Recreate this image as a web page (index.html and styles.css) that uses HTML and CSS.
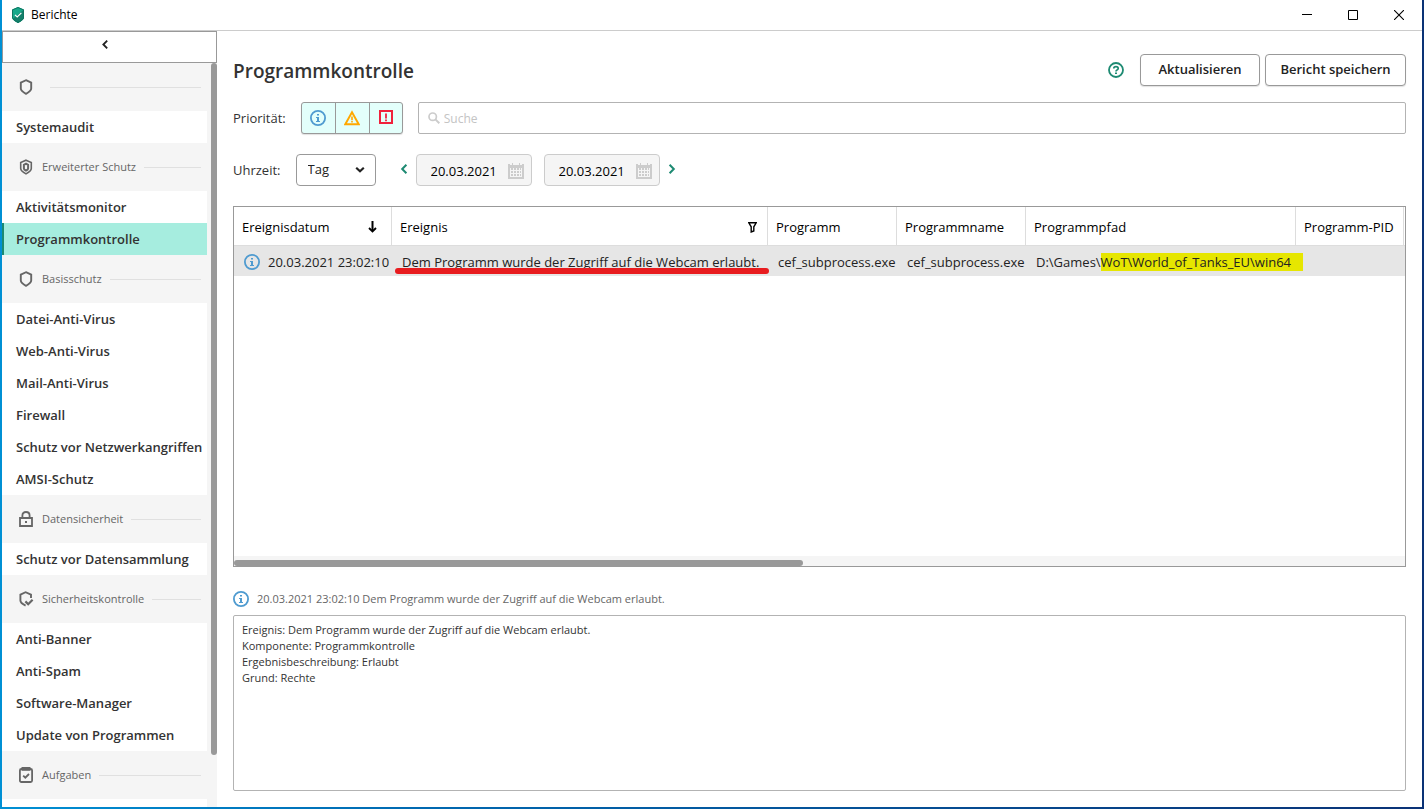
FILE: index.html
```
<!DOCTYPE html>
<html lang="de">
<head>
	<meta charset="UTF-8">
	<meta name="viewport" content="width=device-width, initial-scale=1">
	<title>Berichte</title>
	<link rel="stylesheet" href="styles.css">
</head>
<body>
	<!-- icons -->
	<svg class="sprite" aria-hidden="true">
		<symbol id="i-shield" viewBox="0 0 16 16"><path d="M8 1.2 13.2 3.6V9.6Q13.2 12.2 8 14.8Q2.8 12.2 2.8 9.6V3.6Z" fill="none" stroke="currentColor" stroke-width="1.9"/></symbol>
		<symbol id="i-shield2" viewBox="0 0 16 16"><path d="M8 1.2 13.3 3.5V9.6Q13.3 12.2 8 14.9Q2.7 12.2 2.7 9.6V3.5Z" fill="none" stroke="currentColor" stroke-width="1.6"/><path d="M8 4.6 10.1 5.8V9.4Q10.1 10.6 8 11.6Q5.9 10.6 5.9 9.4V5.8Z" fill="none" stroke="currentColor" stroke-width="2"/></symbol>
		<symbol id="i-lock" viewBox="0 0 16 16"><path d="M2 7H14V15H2ZM4.4 7V4.4Q4.4 1 8 1T11.6 4.4V7" fill="none" stroke="currentColor" stroke-width="1.8"/><path d="M7 10H9V12H7Z" fill="currentColor"/></symbol>
		<symbol id="i-control" viewBox="0 0 16 16"><path d="M13 7V3.7L7.6 1.2 2.4 3.7V9.6Q2.4 12.3 7.6 14.6" fill="none" stroke="currentColor" stroke-width="1.9"/><path d="M7.4 10.4 10.2 13.2 14.6 8.8" fill="none" stroke="currentColor" stroke-width="2.2"/></symbol>
		<symbol id="i-task" viewBox="0 0 16 16"><rect x="1.9" y="2" width="12.2" height="13" rx="1.5" fill="none" stroke="currentColor" stroke-width="1.8"/><path d="M3.5 0H12.5V3.8H3.5Z" fill="currentColor"/><path d="M5.2 8.6 7.3 10.6 11 7" fill="none" stroke="currentColor" stroke-width="1.9"/></symbol>
		<symbol id="i-info" viewBox="0 0 16 16"><circle cx="8" cy="8" r="7.1" fill="none" stroke="currentColor" stroke-width="1.8"/><path d="M7 4H9V5.6H7ZM6 7H9V11H10V12H6V11H7V8H6Z" fill="currentColor"/></symbol>
		<symbol id="i-warn" viewBox="0 0 16 16"><path d="M8 2.2 14.7 14.2H1.3Z" fill="none" stroke="currentColor" stroke-width="1.9"/><path d="M7.2 6.5H8.8V10.2H7.2ZM7.2 11H8.8V12.6H7.2Z" fill="currentColor"/></symbol>
		<symbol id="i-crit" viewBox="0 0 16 16"><path d="M2 1H14V13H2Z" fill="none" stroke="currentColor" stroke-width="2"/><path d="M7.1 3.4H8.9V8.6H7.1ZM7.1 9.6H8.9V11.2H7.1Z" fill="currentColor"/></symbol>
		<symbol id="i-cal" viewBox="0 0 16 16"><path fill-rule="evenodd" d="M0 1H2V2H4V0H5V2H11V0H12V2H14V1H16V16H0ZM2 5V14H14V5Z" fill="currentColor"/><path d="M3 5H5V7H3ZM6 5H8V7H6ZM9 5H11V7H9ZM12 5H13V7H12ZM3 8H5V10H3ZM6 8H8V10H6ZM9 8H11V10H9ZM12 8H13V10H12ZM3 11H5V13H3ZM6 11H8V13H6ZM9 11H11V13H9ZM12 11H13V13H12Z" fill="currentColor"/></symbol>
		<symbol id="i-left" viewBox="0 0 8 12"><path d="M6.4 1.8 2.2 6 6.4 10.2" fill="none" stroke="currentColor" stroke-width="2"/></symbol>
		<symbol id="i-right" viewBox="0 0 8 12"><path d="M1.6 1.8 5.8 6 1.6 10.2" fill="none" stroke="currentColor" stroke-width="2"/></symbol>
	</svg>

	<div class="window">
		<header class="titlebar">
			<svg class="logo" viewBox="0 0 14 16"><path d="M7 0 13 2.6V11Q12 13.6 7 16Q2 13.6 1 11V2.6Z" fill="#17a88a"/><path d="M13 2.6V11Q12 13.6 7 16Q3 14 1.6 12Z" fill="#14806b"/><path d="M7 .5 12.5 2.9V11Q11.6 13.3 7 15.5Q2.4 13.3 1.5 11V2.9Z" fill="none" stroke="#0f7561"/><path d="M4 7.8 6.2 10 10.4 5.8" fill="none" stroke="#fff" stroke-width="1.2"/></svg>
			<span class="caption">Berichte</span>
			<button class="win-btn" aria-label="Minimieren"><svg width="10" height="10"><path d="M0 4.5H10" stroke="#000"/></svg></button>
			<button class="win-btn" aria-label="Maximieren"><svg width="10" height="10"><path d="M.5 .5H9.5V9.5H.5Z" fill="none" stroke="#000"/></svg></button>
			<button class="win-btn" aria-label="Schließen"><svg width="10" height="10"><path d="M0 0 10 10M10 0 0 10" stroke="#000" stroke-width="1.1"/></svg></button>
		</header>

		<div class="body">
			<aside class="sidebar">
				<button class="collapse" aria-label="Menü einklappen"><svg class="arrow"><use href="#i-left"/></svg></button>
				<div class="nav-wrap">
					<nav class="nav">
						<h2 class="group"><svg class="icon"><use href="#i-shield"/></svg></h2>
						<a class="item" href="#">Systemaudit</a>

						<h2 class="group"><svg class="icon"><use href="#i-shield2"/></svg>Erweiterter Schutz</h2>
						<a class="item" href="#">Aktivitätsmonitor</a>
						<a class="item active" href="#">Programmkontrolle</a>

						<h2 class="group"><svg class="icon"><use href="#i-shield"/></svg>Basisschutz</h2>
						<a class="item" href="#">Datei-Anti-Virus</a>
						<a class="item" href="#">Web-Anti-Virus</a>
						<a class="item" href="#">Mail-Anti-Virus</a>
						<a class="item" href="#">Firewall</a>
						<a class="item" href="#">Schutz vor Netzwerkangriffen</a>
						<a class="item" href="#">AMSI-Schutz</a>

						<h2 class="group"><svg class="icon"><use href="#i-lock"/></svg>Datensicherheit</h2>
						<a class="item" href="#">Schutz vor Datensammlung</a>

						<h2 class="group"><svg class="icon"><use href="#i-control"/></svg>Sicherheitskontrolle</h2>
						<a class="item" href="#">Anti-Banner</a>
						<a class="item" href="#">Anti-Spam</a>
						<a class="item" href="#">Software-Manager</a>
						<a class="item" href="#">Update von Programmen</a>

						<h2 class="group"><svg class="icon"><use href="#i-task"/></svg>Aufgaben</h2>
						<a class="item" href="#" aria-hidden="true"></a>
					</nav>
					<div class="vscroll"><div class="vthumb"></div></div>
				</div>
			</aside>

			<main class="main">
				<div class="head">
					<h1>Programmkontrolle</h1>
					<button class="help" aria-label="Hilfe"><svg class="icon" viewBox="0 0 16 16"><circle cx="8" cy="8" r="7" fill="none" stroke="currentColor" stroke-width="1.8"/><path d="M5.8 6.6Q5.8 4.7 8 4.7T10.2 6.4Q10.2 7.4 9 8Q8 8.5 8 9.4" fill="none" stroke="currentColor" stroke-width="1.7"/><path d="M7 10.4H9V12H7Z" fill="currentColor"/></svg></button>
					<button class="btn btn-refresh">Aktualisieren</button>
					<button class="btn btn-save">Bericht speichern</button>
				</div>

				<div class="row row-prio">
					<span>Priorität:</span>
					<div class="prio">
						<label class="info"><input type="checkbox" checked aria-label="Information"><svg class="icon"><use href="#i-info"/></svg></label>
						<label class="warn"><input type="checkbox" checked aria-label="Warnung"><svg class="icon"><use href="#i-warn"/></svg></label>
						<label class="crit"><input type="checkbox" checked aria-label="Kritisch"><svg class="icon"><use href="#i-crit"/></svg></label>
					</div>
					<label class="search">
						<svg width="12" height="12" viewBox="0 0 12 12"><circle cx="4.7" cy="4.7" r="3.7" fill="none" stroke="currentColor" stroke-width="1.7"/><path d="M7.4 7.4 11.3 11.3" stroke="currentColor" stroke-width="2"/></svg>
						<input type="text" placeholder="Suche" aria-label="Suche">
					</label>
				</div>

				<div class="row row-time">
					<label for="range">Uhrzeit:</label>
					<div class="select">
						<select id="range"><option>Tag</option><option>Woche</option><option>Monat</option><option>Jahr</option></select>
						<svg width="10" height="6" viewBox="0 0 10 6"><path d="M1.2 .8 5 4.2 8.8 .8" fill="none" stroke="#222" stroke-width="2.2"/></svg>
					</div>
					<div class="dates">
						<button class="step" aria-label="Zurück"><svg class="arrow"><use href="#i-left"/></svg></button>
						<label class="date"><input type="text" value="20.03.2021" aria-label="Von"><svg class="icon"><use href="#i-cal"/></svg></label>
						<label class="date"><input type="text" value="20.03.2021" aria-label="Bis"><svg class="icon"><use href="#i-cal"/></svg></label>
						<button class="step" aria-label="Weiter"><svg class="arrow"><use href="#i-right"/></svg></button>
					</div>
				</div>

				<div class="grid">
					<div class="grid-body">
						<table>
							<colgroup>
								<col class="c-date"><col class="c-event"><col class="c-prog"><col class="c-prog"><col class="c-path"><col class="c-pid"><col>
							</colgroup>
							<thead>
								<tr>
									<th><div class="th">Ereignisdatum<svg class="sort" width="9" height="12" viewBox="0 0 9 12"><path d="M4.5 0V10" stroke="#000" stroke-width="2"/><path d="M1 7 4.5 10.5 8 7" fill="none" stroke="#000" stroke-width="1.8"/></svg></div></th>
									<th><div class="th">Ereignis<svg width="9" height="11" viewBox="0 0 9 11"><path d="M.8 .8H8.2L5.8 4.8V9L3.2 10V4.8Z" fill="none" stroke="#000" stroke-width="1.4"/></svg></div></th>
									<th>Programm</th>
									<th>Programmname</th>
									<th>Programmpfad</th>
									<th>Programm-PID</th>
									<th></th>
								</tr>
							</thead>
							<tbody>
								<tr>
									<td><div class="when"><svg class="icon"><use href="#i-info"/></svg>20.03.2021 23:02:10</div></td>
									<td class="underlined">Dem Programm wurde der Zugriff auf die Webcam erlaubt.</td>
									<td>cef_subprocess.exe</td>
									<td>cef_subprocess.exe</td>
									<td>D:\Games\<mark>WoT\World_of_Tanks_EU\win64</mark></td>
									<td></td>
									<td></td>
								</tr>
							</tbody>
						</table>
					</div>
					<div class="hscroll"><div class="hthumb"></div></div>
				</div>

				<label class="detail-head" for="detail"><svg class="icon"><use href="#i-info"/></svg>20.03.2021 23:02:10 Dem Programm wurde der Zugriff auf die Webcam erlaubt.</label>
				<textarea class="detail" id="detail" readonly>Ereignis: Dem Programm wurde der Zugriff auf die Webcam erlaubt.
Komponente: Programmkontrolle
Ergebnisbeschreibung: Erlaubt
Grund: Rechte</textarea>
			</main>
		</div>
	</div>
</body>
</html>
```
FILE: styles.css
```
* {
	margin:0;
	padding:0;
	box-sizing:border-box;
}
html,body {
	height:100%;
}
body {
	padding:0 2px 2px;
	font:13px/18px "Open Sans", "Noto Sans", sans-serif;
	color:#222;
	background:linear-gradient(to right, #0090d4 0, #0068b0 30%, #0a3276 100%);
	overflow:hidden;
}
button,input,select,textarea {
	font:inherit;
	color:inherit;
	border:0;
	background:none;
	outline:0;
}
svg {
	display:block;
	flex:none;
}
.sprite {
	position:absolute;
	width:0;
	height:0;
}
.icon {
	width:16px;
	height:16px;
}
.arrow {
	width:8px;
	height:12px;
}
.window {
	display:flex;
	flex-direction:column;
	height:100%;
	background:#fff;
}

/* title bar */
.titlebar {
	display:flex;
	align-items:center;
	height:31px;
	padding-left:9px;
	border-bottom:1px solid #ccc;
	font-size:12px;
	color:#000;
}
.logo {
	width:14px;
	height:16px;
	margin-right:6px;
}
.caption {
	flex:1;
}
.win-btn {
	display:flex;
	align-items:center;
	justify-content:center;
	width:46px;
	height:28px;
}
.body {
	display:flex;
	flex:1;
	min-height:0;
}

/* sidebar */
.sidebar {
	display:flex;
	flex-direction:column;
	flex:none;
	width:215px;
	background:#f5f5f5;
}
.collapse {
	display:flex;
	justify-content:center;
	height:32px;
	padding:7px 10px 0 0;
	border:1px solid #999;
	background:#fff;
}
.collapse .arrow {
	height:11px;
}
.nav-wrap {
	display:flex;
	flex:1;
	min-height:0;
}
.nav {
	flex:1;
	overflow:hidden;
}
.group {
	display:flex;
	align-items:center;
	gap:8px;
	height:48px;
	padding:0 6px 0 16px;
	font-size:11px;
	font-weight:400;
	color:#666;
	white-space:nowrap;
}
.group:after {
	content:"";
	flex:1;
	height:1px;
	background:#e0e0e0;
}
.group:first-child:after {
	margin-left:8px;
}
.item {
	display:block;
	height:32px;
	padding-left:14px;
	line-height:32px;
	font-weight:600;
	color:#333;
	text-decoration:none;
	white-space:nowrap;
	background:#fff;
}
.item.active {
	padding-left:12px;
	border-left:2px solid #1d8a72;
	background:#a6eddf;
}
.vscroll {
	width:10px;
	padding-left:4px;
}
.vthumb {
	height:93%;
	border-radius:3px;
	background:#999;
}

/* main area */
.main {
	display:flex;
	flex-direction:column;
	flex:1;
	min-width:0;
	padding:23px 16px 16px;
}
.head {
	display:flex;
	align-items:center;
	height:32px;
}
h1 {
	flex:1;
	padding-top:2px;
	font-size:19px;
	line-height:24px;
	font-weight:600;
	color:#333;
}
.help {
	margin-right:16px;
	color:#1d8a72;
}
.btn {
	height:32px;
	padding-bottom:2px;
	border:1px solid #999;
	border-radius:4px;
	background:#fff;
	font-weight:600;
	box-shadow:0 1px 1px rgba(0,0,0,.12);
}
.btn-refresh {
	width:120px;
	margin-right:5px;
}
.btn-save {
	width:141px;
}
.row {
	display:flex;
	align-items:center;
	gap:15px;
	height:32px;
	color:#333;
}
.row-prio {
	margin-top:16px;
}
.row-time {
	margin-top:20px;
}
.prio {
	display:flex;
	height:32px;
	border:1px solid #999;
	border-radius:3px;
	background:#e3fffb;
	box-shadow:0 1px 1px rgba(0,0,0,.12);
}
.prio label {
	display:flex;
	align-items:center;
	justify-content:center;
	width:34px;
}
.prio label:first-child,
.prio label:last-child {
	width:33px;
}
.prio label + label {
	border-left:1px solid #999;
}
.prio input {
	position:absolute;
	opacity:0;
}
.info,
.when .icon,
.detail-head .icon {
	color:#4f9bd0;
}
.warn {
	color:#ffa800;
}
.crit {
	color:#f0213c;
}
.search {
	display:flex;
	align-items:center;
	flex:1;
	gap:4px;
	height:32px;
	padding:0 9px;
	border:1px solid #b3b3b3;
	border-radius:2px;
	color:#ccc;
}
.search input {
	flex:1;
	padding-top:2px;
	font-size:12px;
	color:#333;
}
.search input::placeholder {
	color:#c4c4c4;
	opacity:1;
}
.select {
	position:relative;
	width:80px;
	height:32px;
}
.select select {
	width:100%;
	height:100%;
	padding:0 24px 2px 11px;
	border:1px solid #999;
	border-radius:4px;
	appearance:none;
	background:#fff;
	color:#222;
}
.select svg {
	position:absolute;
	right:11px;
	top:13px;
	pointer-events:none;
}
.dates {
	display:flex;
	align-items:center;
	gap:12px;
	margin-left:9px;
}
.step {
	padding-bottom:2px;
	color:#1d8a72;
}
.step:first-child {
	margin-right:-4px;
}
.step:last-child {
	margin-left:-4px;
}
.date {
	display:flex;
	align-items:center;
	width:116px;
	height:32px;
	padding:2px 7px 0 14px;
	border:1px solid #ccc;
	border-radius:4px;
	background:#f5f5f5;
	color:#ccc;
}
.date input {
	flex:1;
	min-width:0;
	color:#000;
}

/* report table */
.grid {
	display:flex;
	flex-direction:column;
	flex:1;
	min-height:0;
	margin-top:20px;
	border:1px solid #999;
}
.grid-body {
	flex:1;
	overflow:hidden;
}
table {
	width:100%;
	table-layout:fixed;
	border-collapse:separate;
	border-spacing:0;
}
.c-date {
	width:158px;
}
.c-event {
	width:376px;
}
.c-prog {
	width:129px;
}
.c-path {
	width:270px;
}
.c-pid {
	width:108px;
}
th {
	height:39px;
	padding:2px 8px 0;
	border-right:1px solid #ddd;
	border-bottom:1px solid #ddd;
	font-weight:400;
	text-align:left;
	white-space:nowrap;
	color:#000;
}
th:last-child {
	padding:0;
	border-right:0;
}
.th {
	display:flex;
	align-items:center;
	justify-content:space-between;
	padding-right:2px;
}
.sort {
	margin-right:4px;
}
td {
	height:30px;
	padding:2px 0 0 10px;
	white-space:nowrap;
}
td:last-child {
	padding:0;
}
tbody tr {
	background:#e6e6e6;
}
.when {
	display:flex;
	align-items:center;
	gap:8px;
}
.underlined {
	position:relative;
}
/* red marker line over the event text */
.underlined:after {
	content:"";
	position:absolute;
	left:3px;
	right:-1px;
	bottom:2px;
	height:6px;
	border-radius:3px;
	background:#e81c1f;
}
mark {
	padding-right:12px;
	background:#e6e600;
	color:inherit;
}
.hscroll {
	height:10px;
	padding-top:4px;
	background:#f5f5f5;
}
.hthumb {
	width:48.6%;
	height:6px;
	border-radius:3px;
	background:#999;
}

/* details */
.detail-head {
	display:flex;
	align-items:center;
	gap:8px;
	height:32px;
	margin-top:16px;
	font-size:11px;
	color:#666;
}
.detail {
	height:176px;
	padding:6px 8px;
	border:1px solid #b3b3b3;
	border-radius:2px;
	resize:none;
	font-size:11px;
	line-height:16px;
	color:#333;
}
```
